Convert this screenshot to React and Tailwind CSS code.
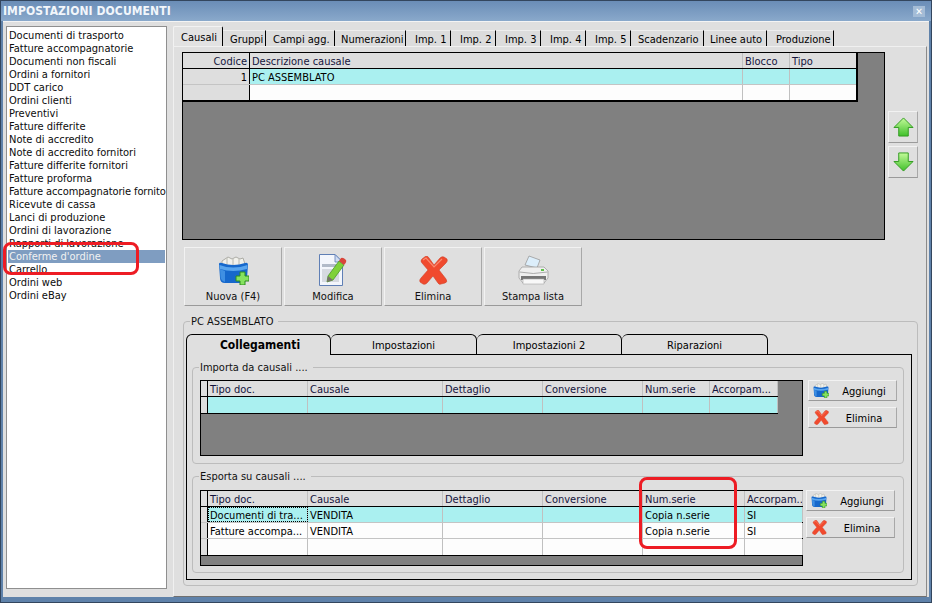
const font = "font-['DejaVu_Sans_Condensed','DejaVu_Sans',sans-serif]";

const docs = ["Documenti di trasporto","Fatture accompagnatorie","Documenti non fiscali","Ordini a fornitori","DDT carico","Ordini clienti","Preventivi","Fatture differite","Note di accredito","Note di accredito fornitori","Fatture differite fornitori","Fatture proforma","Fatture accompagnatorie fornito","Ricevute di cassa","Lanci di produzione","Ordini di lavorazione","Rapporti di lavorazione","Conferme d'ordine","Carrello","Ordini web","Ordini eBay"];

const topTabs = [
  ["Causali","w-[50px] pl-[7px]"],["Gruppi","w-[43px] pl-[7px]"],["Campi agg.","w-[69px] pl-[7px]"],["Numerazioni","w-[71px] pl-[6px]"],["Imp. 1","w-[45px] pl-[9px]"],["Imp. 2","w-[45px] pl-[9px]"],["Imp. 3","w-[45px] pl-[9px]"],["Imp. 4","w-[45px] pl-[9px]"],["Imp. 5","w-[45px] pl-[9px]"],["Scadenzario","w-[73px] pl-[7px]"],["Linee auto","w-[63px] pl-[6px]"],["Produzione","w-[67px] pl-[9px]"],
];

function FolderIcon({ size = 31 }) {
  return (
    <svg width={size} height={size * 29 / 31} viewBox="0 0 31 29">
      <path d="M4 5 L10 1 L14 3 L18 1 L22 3 L25 2 L27 8 V14 H4z" fill="#f1f1ec" stroke="#9d9d96" strokeWidth=".8" />
      <path d="M9 2 V10 M15 3 V10 M21 3 V10" stroke="#b8b8b0" strokeWidth="1" />
      <path d="M1 8 Q1 6 4 7 Q15 11 27 7 Q30 6 30 9 L29 22 Q28 27 23 27 H7 Q2 27 2 22z" fill="#1668cc" />
      <path d="M1.5 9 Q15 14 29.5 9 L29 13 Q15 17 2 13z" fill="#5aa6ee" />
      <path d="M2 13 L7 15 V26 Q3 25 2.5 21z" fill="#3f8fe2" />
      <path d="M18 20 H22 V16 H27 V20 H31 V25 H27 V29 H22 V25 H18z" fill="#85e25f" stroke="#2c8c20" strokeWidth="1" />
    </svg>
  );
}
function PencilDocIcon() {
  return (
    <svg width="28" height="32" viewBox="0 0 28 32">
      <path d="M.5 .5 H16 L23.5 8 V31.5 H.5z" fill="#f3f6fc" stroke="#5f7fb5" strokeWidth="1" />
      <path d="M16 .5 V8 H23.5z" fill="#cfdcf2" stroke="#5f7fb5" strokeWidth=".8" />
      <rect x="3" y="10" width="14" height="3" fill="#b1bac8" />
      <rect x="3" y="15" width="17" height="13" fill="#d6dae1" />
      <path d="M9 22 L20 7 L25 11 L14 26 L8 28z" fill="#7fd13a" stroke="#3f8f1e" strokeWidth=".7" />
      <path d="M20 7 L22 4 Q24 3 27 6 Q28 8 25 11z" fill="#d9453a" />
      <path d="M9 22 L14 26 L8 28z" fill="#77706a" />
    </svg>
  );
}
function XIcon({ size = 29 }) {
  return (
    <svg width={size} height={size} viewBox="0 0 29 29">
      <path d="M7 0 Q9 0 10 2 L15 9 L21 2 Q23 0 25 1 L28 3 Q29 5 27 7 L20 14 L27 23 Q29 26 26 27 L22 28 Q20 29 19 27 L14 20 L8 27 Q6 29 4 28 L1 26 Q0 24 2 22 L9 14 L3 7 Q1 5 3 3z" fill="#f04a2e" stroke="#cf4128" strokeWidth=".6" />
      <path d="M4 4 L7 2 L15 11 L23 3" fill="none" stroke="#fa8a70" strokeWidth="1.2" />
    </svg>
  );
}
function PrinterIcon() {
  return (
    <svg width="31" height="30" viewBox="0 0 31 30">
      <path d="M7 10 L11 1 L22 5 L19 13z" fill="#dceefb" stroke="#9a9a9a" strokeWidth=".8" />
      <path d="M4 12 H26 L30 16 V23 L26 28 H5 L1 23 V16z" fill="#efefef" stroke="#a0a0a0" strokeWidth=".8" />
      <path d="M1.5 17 Q15 20 29.5 17" fill="none" stroke="#9a9a9a" strokeWidth=".8" />
      <path d="M3 21 H28 V25 H3z" fill="#767676" />
      <path d="M5 24 H26 V29 H5z" fill="#f8f8f8" stroke="#a8a8a8" strokeWidth=".6" />
      <rect x="23" y="14" width="3" height="2" fill="#5fc04a" />
    </svg>
  );
}
function Arrow({ down }) {
  const id = down ? "ad" : "au";
  return (
    <svg width="21" height="20" viewBox="0 0 22 21" className={down ? "rotate-180" : ""}>
      <defs>
        <linearGradient id={id} x1="0" y1={down ? "1" : "0"} x2="0" y2={down ? "0" : "1"}>
          <stop offset="0" stopColor="#c4fb9a" />
          <stop offset="1" stopColor="#3fc02a" />
        </linearGradient>
      </defs>
      <path d="M11 1 L21 11 H16 V20 H6 V11 H1z" fill={`url(#${id})`} stroke="#2f9a1f" strokeWidth="1" strokeLinejoin="round" />
    </svg>
  );
}

const raised = "border border-t-[#f2f2f2] border-l-[#f2f2f2] border-b-[#9a9a9a] border-r-[#a8a8a8] bg-[#dfdfdf]";

function BigButton({ icon, label }) {
  return (
    <div className={`w-[98px] h-[59px] flex flex-col items-center ${raised}`}>
      <div className="h-[38px] mt-[3px] flex items-center justify-center">{icon}</div>
      <span className="mt-[1px] text-[#111]">{label}</span>
    </div>
  );
}
function SmallButton({ icon, label }) {
  return (
    <div className={`w-[89px] h-[21px] flex items-center ${raised}`}>
      <span className="w-[22px] pl-[2px] flex items-center justify-center">{icon}</span>
      <span className="flex-1 text-center pl-[1px] pt-[1px]">{label}</span>
    </div>
  );
}

function Cell({ w, children, className = "" }) {
  return (
    <div className={`${w} h-full shrink-0 border-r border-[#c0c0c0] px-[2px] pt-[1px] flex items-center overflow-hidden whitespace-nowrap ${className}`}>
      {children}
    </div>
  );
}

function SubGrid({ cols, rows, tableWidth }) {
  return (
    <div className="w-[603px] h-[76px] bg-[#808080] border border-black">
      <div className={`${tableWidth} border-r border-b border-black`}>
        <div className="flex h-[16px] bg-[#dedede] border-b border-black">
          <div className="w-[7px] h-full shrink-0 border-r border-black" />
          {cols.map(([n, w]) => <Cell key={n} w={w} className="text-[#14143c]">{n}</Cell>)}
        </div>
        {rows.map((r, i) => (
          <div key={i} className={`flex h-[16px] ${r.bg} ${i < rows.length - 1 ? "border-b border-[#c4c4c4]" : ""}`}>
            <div className="w-[7px] h-full shrink-0 border-r border-black bg-[#dedede]" />
            {cols.map(([n, w], j) => (
              <Cell key={n} w={w} className={r.sel && j === 0 ? "outline-1 outline-dotted -outline-offset-1 outline-black" : ""}>{r.c[j]}</Cell>
            ))}
          </div>
        ))}
      </div>
    </div>
  );
}

function Group({ label, className, children }) {
  return (
    <div className={`border border-[#bcbcbc] rounded-[4px] ${className}`}>
      <div className="-mt-[7px] ml-[6px] pl-[1px] pr-[5px] w-fit h-[14px] leading-[14px] bg-[#dfdfdf] text-[#111]">{label}</div>
      {children}
    </div>
  );
}

const cols1 = [["Tipo doc.","w-[100px]"],["Causale","w-[135px]"],["Dettaglio","w-[100px]"],["Conversione","w-[100px]"],["Num.serie","w-[67px]"],["Accorpam...","w-[68px]"]];
const cols2 = [["Tipo doc.","w-[100px]"],["Causale","w-[135px]"],["Dettaglio","w-[100px]"],["Conversione","w-[100px]"],["Num.serie","w-[102px]"],["Accorpam..","w-[58px]"]];
const innerTab = "h-[21px] border border-black border-l-0 rounded-t-[6px] bg-[#dfdfdf] flex items-center justify-center pt-[1px]";

export default function App() {
  return (
    <div className={`relative w-[932px] h-[603px] overflow-hidden bg-[#5f82aa] border border-[#33465e] text-[11px] leading-[13px] text-black ${font}`}>
      <div className="h-[20px] flex items-center justify-between pl-[2px] pr-[6px] bg-gradient-to-b from-[#6a8db7] to-[#8aa9cb]">
        <span className="font-bold text-[12px] text-[#f2f6fb] tracking-[0.1px]">IMPOSTAZIONI DOCUMENTI</span>
        <span className="w-[12px] h-[11px] flex items-center justify-center bg-[#a4bcd6] text-white font-bold text-[10px]">✕</span>
      </div>
      <div className="h-[576px] ml-[2px] mr-[2px] bg-[#dfdfdf] border-t border-[#f4f4f4] flex items-start">
        <div className="mt-[4px] ml-[3px] w-[161px] h-[563px] bg-white border border-[#8f8f8f] pt-[2px] px-[1px] overflow-hidden shrink-0">
          {docs.map((d) => (
            <div key={d} className={`h-[13px] pl-[1px] flex items-center whitespace-nowrap ${d === "Conferme d'ordine" ? "bg-[#7f9dc1] text-[#f2f2f2]" : "text-[#0c0c0c]"} ${d === "Fatture accompagnatorie fornito" ? "tracking-[-0.1px]" : ""}`}>{d}</div>
          ))}
        </div>
        <div className="ml-[6px] w-[754px] mt-[4px]">
          <div className="flex h-[20px] items-end">
            {topTabs.map(([t, w], i) => (
              <div key={t} className={`${w} shrink-0 flex items-center border-r border-r-black ${i === 0 ? "h-[20px] bg-[#e2e2e2] border-t border-t-[#f2f2f2] border-l border-l-[#f2f2f2] rounded-t-[2px] pt-[2px]" : "h-[16px] bg-[#dcdcdc] border-t border-t-[#eeeeee] pt-[1px]"}`}>{t}</div>
            ))}
          </div>
          <div className="h-[551px] border border-t-[#f0f0f0] border-l-[#f0f0f0] border-r-[#8a8a8a] border-b-[#707070] pt-[5px] pl-[8px]">
            <div className="flex items-start">
              <div className="w-[703px] h-[188px] bg-[#808080] border border-black shrink-0">
                <div className="w-[675px] border-r-2 border-b-2 border-black">
                  <div className="flex h-[16px] bg-[#dedede] border-b border-black">
                    <div className="w-[67px] h-full shrink-0 border-r border-black flex items-center justify-end pr-[2px] pt-[1px] text-[#14143c]">Codice</div>
                    <Cell w="w-[493px]" className="text-[#14143c]">Descrizione causale</Cell>
                    <Cell w="w-[47px]" className="text-[#14143c]">Blocco</Cell>
                    <div className="flex-1 px-[2px] pt-[1px] flex items-center text-[#14143c]">Tipo</div>
                  </div>
                  <div className="flex h-[16px] bg-[#aaf0f0] border-b border-[#c4c4c4]">
                    <div className="w-[67px] h-full shrink-0 border-r border-black bg-[#dedede] flex items-center justify-end pr-[2px] pt-[1px]">1</div>
                    <Cell w="w-[493px]">PC ASSEMBLATO</Cell>
                    <Cell w="w-[47px]" />
                  </div>
                  <div className="flex h-[15px] bg-[#fdfdfd]">
                    <div className="w-[67px] h-full shrink-0 border-r border-black bg-[#dedede]" />
                    <Cell w="w-[493px]" />
                    <Cell w="w-[47px]" />
                  </div>
                </div>
              </div>
              <div className="ml-[3px] mt-[59px] flex flex-col gap-[3px]">
                <div className={`w-[30px] h-[32px] flex items-center justify-center ${raised}`}><Arrow /></div>
                <div className={`w-[30px] h-[32px] flex items-center justify-center ${raised}`}><Arrow down /></div>
              </div>
            </div>
            <div className="flex gap-[2px] mt-[7px] ml-[2px]">
              <BigButton icon={<FolderIcon />} label="Nuova (F4)" />
              <BigButton icon={<PencilDocIcon />} label="Modifica" />
              <BigButton icon={<XIcon />} label="Elimina" />
              <BigButton icon={<PrinterIcon />} label="Stampa lista" />
            </div>
            <Group label="PC ASSEMBLATO" className="mt-[15px] ml-[1px] w-[735px] h-[265px]">
              <div className="ml-[2px] mt-[-1px]">
                <div className="h-[21px] mt-[6px] flex items-end relative z-10">
                  <div className="w-[145px] h-[21px] border border-black border-b-0 rounded-t-[6px] bg-[#dfdfdf] flex items-center justify-center pl-[3px] pt-[1px] font-bold text-[12px]">Collegamenti</div>
                  <div className={`w-[146px] ${innerTab}`}>Impostazioni</div>
                  <div className={`w-[145px] ${innerTab}`}>Impostazioni 2</div>
                  <div className={`w-[146px] ${innerTab}`}>Riparazioni</div>
                </div>
                <div className="w-[726px] h-[226px] -mt-[1px] border border-black pt-[12px] pl-[5px]">
                  <Group label="Importa da causali ...." className="w-[712px] h-[97px]">
                    <div className="flex mt-[5px] ml-[7px]">
                      <SubGrid cols={cols1} tableWidth="w-[577px]" rows={[{ bg: "bg-[#aaf0f0]", c: [] }]} />
                      <div className="ml-[5px] flex flex-col gap-[6px]">
                        <SmallButton icon={<FolderIcon size={16} />} label="Aggiungi" />
                        <SmallButton icon={<XIcon size={15} />} label="Elimina" />
                      </div>
                    </div>
                  </Group>
                  <Group label="Esporta su causali ...." className="mt-[12px] w-[712px] h-[97px]">
                    <div className="flex mt-[6px] ml-[7px]">
                      <SubGrid cols={cols2} tableWidth="w-[602px]" rows={[
                        { bg: "bg-[#aaf0f0]", sel: true, c: ["Documenti di tra...","VENDITA","","","Copia n.serie","SI"] },
                        { bg: "bg-[#fdfdfd]", c: ["Fatture accompa...","VENDITA","","","Copia n.serie","SI"] },
                        { bg: "bg-[#fdfdfd]", c: [] },
                      ]} />
                      <div className="ml-[3px] flex flex-col gap-[6px]">
                        <SmallButton icon={<FolderIcon size={16} />} label="Aggiungi" />
                        <SmallButton icon={<XIcon size={15} />} label="Elimina" />
                      </div>
                    </div>
                  </Group>
                </div>
              </div>
            </Group>
          </div>
        </div>
      </div>
      <div className="absolute left-[2px] top-[241px] w-[136px] h-[33px] border-[3px] border-[#ed1c24] rounded-[8px]" />
      <div className="absolute left-[638px] top-[476px] w-[98px] h-[72px] border-[3px] border-[#ed1c24] rounded-[8px]" />
    </div>
  );
}
